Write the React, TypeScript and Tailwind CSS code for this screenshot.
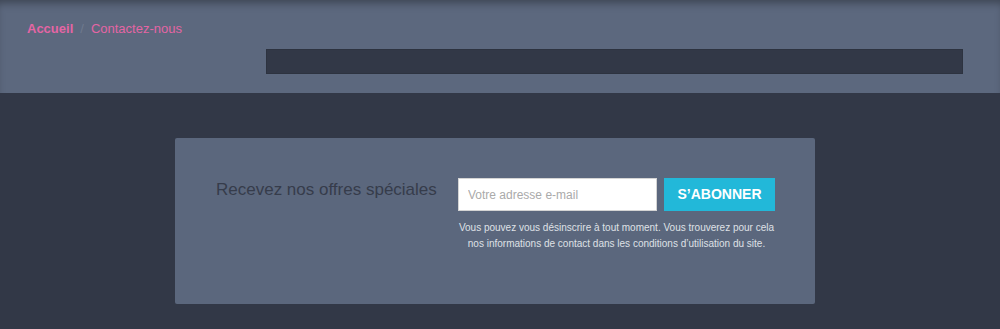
export default function App() {
  return (
    <div className="min-h-[329px] bg-[#323847] font-['Liberation_Sans',Arial,sans-serif]">
      <section className="h-[93px] bg-[#5c687e] shadow-[inset_0_7px_8px_-4px_rgba(0,0,0,0.35)]">
        <nav className="flex items-center gap-[7px] pl-[27px] pt-[21px] text-[13px] leading-[16px]">
          <a className="font-bold text-[#e465a4]">Accueil</a>
          <span className="text-[#6f7a8e]">/</span>
          <a className="text-[#e465a4]">Contactez-nous</a>
        </nav>
        <div className="ml-[266px] mt-[12px] h-[25px] w-[697px] border border-[#2d3340] bg-[#323847]" />
      </section>

      <section className="flex justify-center pr-[10px] pt-[45px] pb-[25px]">
        <div className="flex h-[166px] w-[640px] rounded-[2px] bg-[#5b677d] pl-[41px] pt-[40px]">
          <h2 className="mt-[2px] w-[242px] text-[17px] leading-[20px] text-[#363c4b]">
            Recevez nos offres spéciales
          </h2>
          <div className="flex w-[317px] flex-col">
            <div className="flex gap-[7px]">
              <input
                placeholder="Votre adresse e-mail"
                className="h-[33px] w-[199px] border border-[#d4d4d4] bg-white px-[9px] text-[12px] text-[#555] outline-none placeholder:text-[#aaaaaa]"
              />
              <button className="h-[33px] w-[111px] bg-[#22b8d9] text-[14px] font-bold text-white">
                S’ABONNER
              </button>
            </div>
            <p className="mt-[9px] text-center text-[10px] leading-[16px] text-[#dfe1e6]">
              Vous pouvez vous désinscrire à tout moment. Vous trouverez pour cela
              <br />
              nos informations de contact dans les conditions d’utilisation du site.
            </p>
          </div>
        </div>
      </section>
    </div>
  );
}
